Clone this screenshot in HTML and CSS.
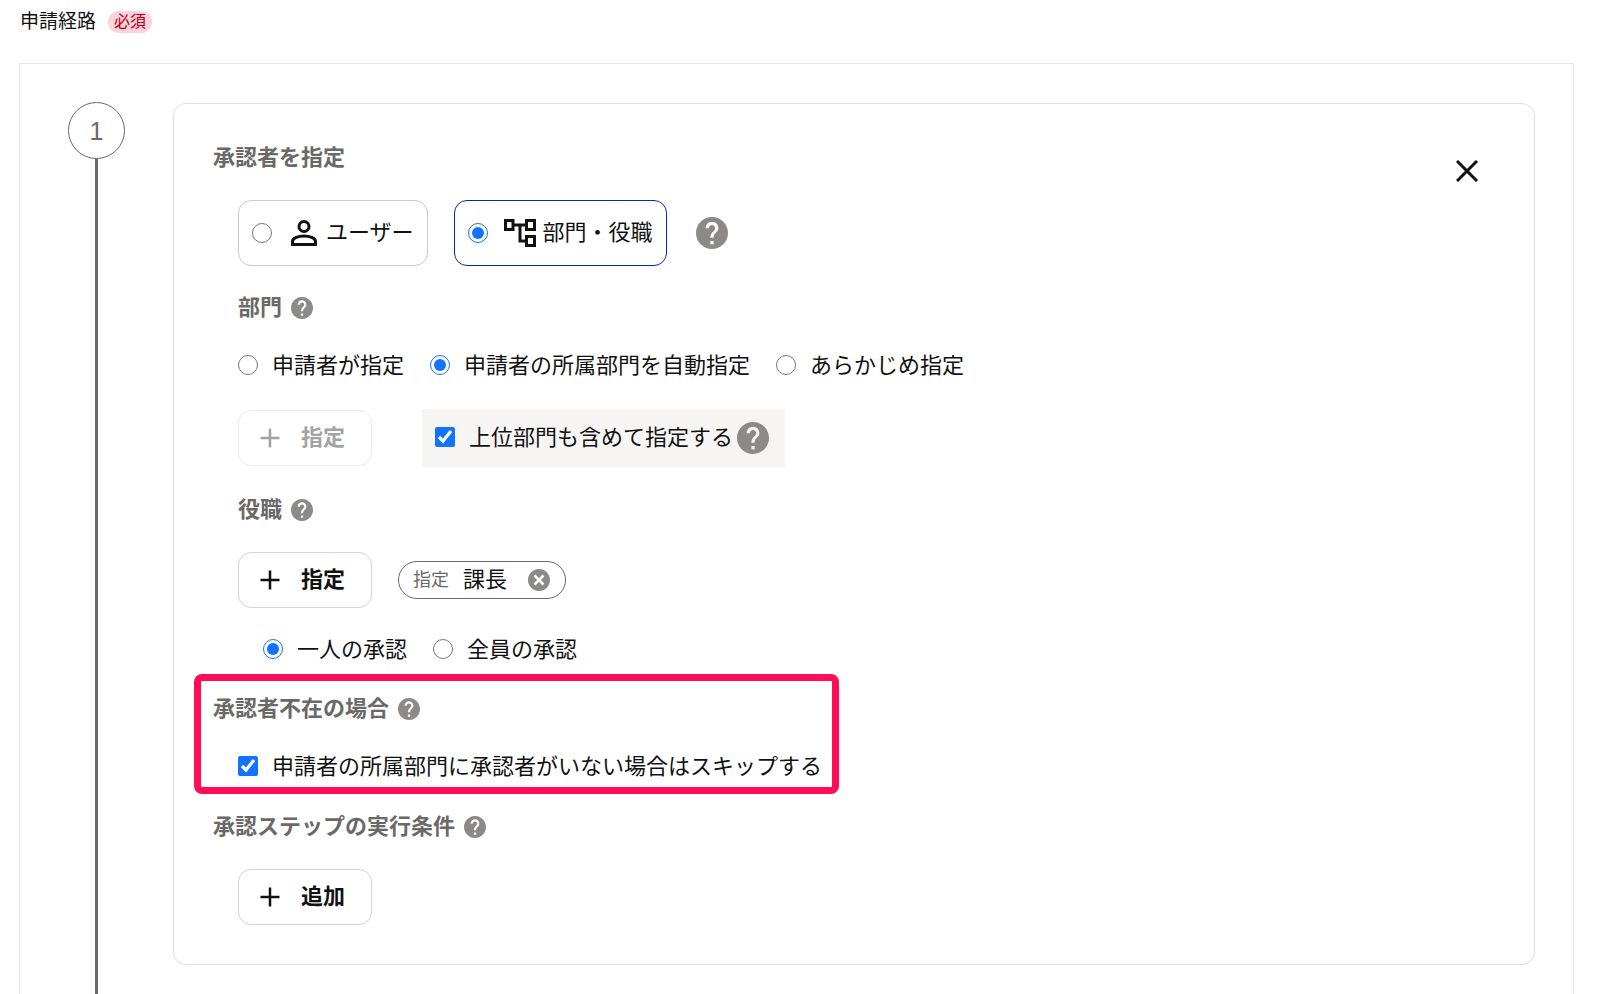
FILE: index.html
```html
<!DOCTYPE html>
<html lang="ja">
<head>
<meta charset="utf-8">
<meta name="viewport" content="width=device-width, initial-scale=1">
<title>申請経路</title>
<link rel="stylesheet" href="styles.css">
</head>
<body>
<svg class="sprite" aria-hidden="true">
  <symbol id="help" viewBox="2 2 20 20"><path d="M12 2C6.48 2 2 6.48 2 12s4.480 10 10 10 10-4.480 10-10S17.520 2 12 2zm1 17h-2v-2h2v2zm2.070-7.750-.9.920C13.450 12.900 13 13.500 13 15h-2v-.5c0-1.100.45-2.100 1.170-2.830l1.240-1.260c.37-.36.59-.86.59-1.410 0-1.100-.9-2-2-2s-2 .9-2 2H8c0-2.210 1.790-4 4-4s4 1.790 4 4c0 .88-.36 1.680-.93 2.250z"/></symbol>
  <symbol id="plus" viewBox="0 0 20 20"><path d="M10 0.500v19M0.500 10h19" fill="none" stroke="currentColor" stroke-width="2.500"/></symbol>
</svg>
<header class="page-head">
  <h1 class="title">申請経路</h1>
  <span class="badge">必須</span>
</header>
<main class="panel">
  <div class="step">
    <span class="step-number">1</span>
    <span class="step-line"></span>
  </div>
  <form class="card">
    <button type="button" class="close" aria-label="閉じる"><svg viewBox="0 0 22 22"><path d="M1 1l20 20M21 1L1 21" fill="none" stroke="currentColor" stroke-width="3"/></svg></button>

    <h2 class="heading">承認者を指定</h2>
    <div class="row indent">
      <label class="option"><input type="radio" name="kind">
        <span class="option-text"><svg class="icon-user" viewBox="0 0 26 26"><g fill="none" stroke="currentColor" stroke-width="3"><circle cx="13" cy="6.500" r="5"/><path d="M1.500 24.500v-3c0-3.400 6-5.500 11.500-5.500s11.500 2.100 11.500 5.500v3z"/></g></svg>ユーザー</span></label>
      <label class="option selected"><input type="radio" name="kind" checked>
        <span class="option-text tight"><svg class="icon-tree" viewBox="0 0 32 28"><g fill="none" stroke="currentColor" stroke-width="3"><path d="M1.500 1.500h7.500v9H1.500zM22.500 1.500h8v9h-8zM22.500 17.500h8v9h-8zM9 6h13.500M16 6v16h6.500"/></g></svg>部門・役職</span></label>
      <button type="button" class="help large" aria-label="ヘルプ"><svg><use href="#help"/></svg></button>
    </div>

    <h3 class="heading indent">部門<button type="button" class="help" aria-label="部門のヘルプ"><svg><use href="#help"/></svg></button></h3>
    <div class="row indent">
      <label class="choice"><input type="radio" name="dept">申請者が指定</label>
      <label class="choice"><input type="radio" name="dept" checked>申請者の所属部門を自動指定</label>
      <label class="choice"><input type="radio" name="dept">あらかじめ指定</label>
    </div>
    <div class="row indent wide">
      <button type="button" class="add" disabled><svg><use href="#plus"/></svg>指定</button>
      <div class="include">
        <label class="choice"><input type="checkbox" checked>上位部門も含めて指定する</label>
        <button type="button" class="help large" aria-label="上位部門のヘルプ"><svg><use href="#help"/></svg></button>
      </div>
    </div>

    <h3 class="heading indent">役職<button type="button" class="help" aria-label="役職のヘルプ"><svg><use href="#help"/></svg></button></h3>
    <div class="row indent">
      <button type="button" class="add"><svg><use href="#plus"/></svg>指定</button>
      <span class="chip"><small>指定</small>課長<button type="button" class="chip-remove" aria-label="削除"><svg viewBox="0 0 22 22"><circle cx="11" cy="11" r="11" fill="currentColor"/><path d="M6.500 6.500l9 9M15.500 6.500l-9 9" stroke="#fff" stroke-width="2.500"/></svg></button></span>
    </div>
    <div class="row indent-more">
      <label class="choice"><input type="radio" name="approval" checked>一人の承認</label>
      <label class="choice"><input type="radio" name="approval">全員の承認</label>
    </div>

    <section class="absent">
      <h2 class="heading">承認者不在の場合<button type="button" class="help" aria-label="承認者不在の場合のヘルプ"><svg><use href="#help"/></svg></button></h2>
      <div class="row indent">
        <label class="choice"><input type="checkbox" checked>申請者の所属部門に承認者がいない場合はスキップする</label>
      </div>
    </section>

    <h2 class="heading">承認ステップの実行条件<button type="button" class="help" aria-label="実行条件のヘルプ"><svg><use href="#help"/></svg></button></h2>
    <div class="row indent">
      <button type="button" class="add"><svg><use href="#plus"/></svg>追加</button>
    </div>
  </form>
</main>
</body>
</html>
```
FILE: styles.css
```css
* { box-sizing: border-box; }

body {
  margin: 0;
  min-height: 100vh;
  display: flex;
  flex-direction: column;
  background: #fff;
  color: #111;
  font: 22px/32px "Liberation Sans", "Noto Sans CJK JP", sans-serif;
}

button, input { margin: 0; font: inherit; }
button { padding: 0; border: 0; background: none; color: inherit; cursor: pointer; }
svg { display: block; flex: none; }
.sprite { position: absolute; width: 0; height: 0; }

.page-head {
  display: flex;
  align-items: center;
  gap: 12px;
  padding: 6px 20px 25px;
}
.title { margin: 0; font-size: 19px; font-weight: 400; }
.badge {
  padding: 0 6px;
  border-radius: 11px;
  background: #fdd2d9;
  color: #b3001e;
  font-size: 16px;
  line-height: 22px;
}

.panel {
  flex: 1;
  display: flex;
  gap: 48px;
  margin: 0 26px 0 19px;
  padding: 0 38px 0 48px;
  border: 1px solid #e6e6e6;
  border-bottom: 0;
}

.step {
  display: flex;
  flex-direction: column;
  align-items: center;
  padding-top: 38px;
}
.step-number {
  width: 57px;
  height: 57px;
  border: 1px solid #6b6967;
  border-radius: 50%;
  color: #6b6967;
  font: 25px/56px "Liberation Sans", sans-serif;
  text-align: center;
}
.step-line { flex: 1; width: 3px; background: #6b6967; }

.card {
  position: relative;
  flex: 1;
  display: flex;
  flex-direction: column;
  gap: 26px;
  margin: 39px 0 29px;
  padding: 38px 39px;
  border: 1px solid #e2e0df;
  border-radius: 13px;
}
.close { position: absolute; top: 56px; right: 56px; width: 22px; height: 22px; }
.close svg { width: 22px; height: 22px; }

.heading {
  display: flex;
  align-items: center;
  gap: 9px;
  margin: 0;
  color: #6b6967;
  font-size: 22px;
  font-weight: 700;
}
.indent { margin-left: 25px; }
.indent-more { margin-left: 50px; }
.row { display: flex; align-items: center; gap: 26px; }
.row.wide { gap: 50px; padding: 1px 0; }

.help { color: #8c8a88; }
.help svg { width: 22px; height: 22px; fill: currentColor; }
.help.large svg { width: 32px; height: 32px; }
.row > .help { margin-left: 3px; }

input { width: 20px; height: 20px; flex: none; accent-color: #1273ff; }
.choice { display: flex; align-items: center; gap: 14px; }
.choice input { margin-bottom: 3px; }

.option {
  display: flex;
  align-items: center;
  gap: 19px;
  padding: 16px 13px;
  border: 1px solid #ccc9c7;
  border-radius: 13px;
}
.option.selected { gap: 16px; border-color: #0a24c0; }
.option-text { display: flex; align-items: center; gap: 9px; }
.option-text.tight { gap: 7px; }
.icon-user { width: 26px; height: 26px; }
.icon-tree { width: 32px; height: 28px; }

.add {
  display: flex;
  align-items: center;
  gap: 21px;
  height: 56px;
  padding: 0 26px 0 21px;
  border: 1px solid #d6d3d0;
  border-radius: 13px;
  font-weight: 700;
}
.add svg { width: 20px; height: 20px; }
.add:disabled { border-color: #ebeae9; color: #a3a3a3; cursor: default; }

.include {
  display: flex;
  align-items: center;
  gap: 4px;
  padding: 13px 16px 13px 13px;
  background: #f7f5f4;
}

.chip {
  display: flex;
  align-items: center;
  gap: 14px;
  padding: 2px 15px 2px 14px;
  border: 1px solid #6b6967;
  border-radius: 19px;
}
.chip small { color: #6b6967; font-size: 18px; }
.chip-remove { margin-left: 7px; color: #8c8a88; }
.chip-remove svg { width: 22px; height: 22px; }

.absent {
  position: relative;
  align-self: flex-start;
  display: flex;
  flex-direction: column;
  gap: 26px;
  padding: 1px 0 2px;
}
.absent::after {
  content: "";
  position: absolute;
  inset: -18px -17px -9px -19px;
  border: 7px solid #ff0d57;
  border-radius: 8px;
  pointer-events: none;
}
```
